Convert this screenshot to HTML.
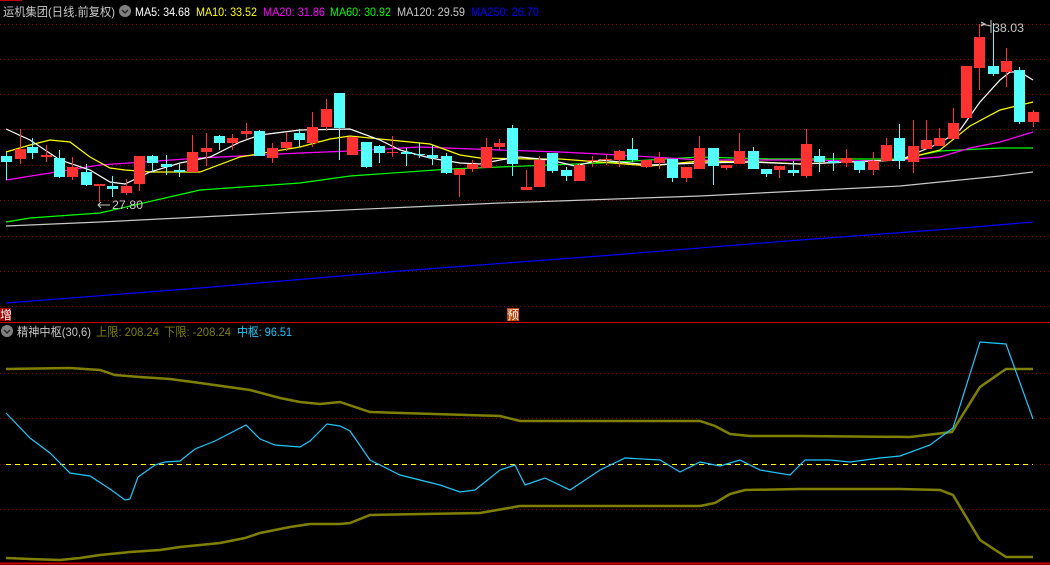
<!DOCTYPE html>
<html><head><meta charset="utf-8"><style>
html,body{margin:0;padding:0;background:#000;width:1050px;height:565px;overflow:hidden}
svg{display:block}
text{font-family:"Liberation Sans","Noto Sans CJK SC",sans-serif;font-size:12px}
</style></head><body>
<svg width="1050" height="565" viewBox="0 0 1050 565" xmlns="http://www.w3.org/2000/svg">
<rect width="1050" height="565" fill="#000"/>
<line x1="0" y1="0.5" x2="22" y2="0.5" stroke="#c00000"/>
<g stroke="#8a0000" stroke-dasharray="1,3" stroke-width="1">
<line x1="0" y1="24.5" x2="1050" y2="24.5"/><line x1="0" y1="59.5" x2="1050" y2="59.5"/>
<line x1="0" y1="94.5" x2="1050" y2="94.5"/><line x1="0" y1="129.5" x2="1050" y2="129.5"/>
<line x1="0" y1="165.5" x2="1050" y2="165.5"/><line x1="0" y1="200.5" x2="1050" y2="200.5"/>
<line x1="0" y1="236.5" x2="1050" y2="236.5"/><line x1="0" y1="271.5" x2="1050" y2="271.5"/>
<line x1="0" y1="306.5" x2="1050" y2="306.5"/>
<line x1="0" y1="373.5" x2="1050" y2="373.5"/><line x1="0" y1="418.5" x2="1050" y2="418.5"/>
<line x1="0" y1="464.5" x2="1050" y2="464.5"/><line x1="0" y1="509.5" x2="1050" y2="509.5"/>
</g>
<line x1="0" y1="322.5" x2="1050" y2="322.5" stroke="#d00000"/>
<line x1="0" y1="563.5" x2="1050" y2="563.5" stroke="#d00000" stroke-width="2"/>
<line x1="6" y1="464.5" x2="1033" y2="464.5" stroke="#ffff00" stroke-dasharray="5,4"/>

<g fill="none" stroke-width="1.2">
<polyline stroke="#0000ff" points="6,303 200,288 400,271 600,256 800,240 950,229 1033,222"/>
<polyline stroke="#c8c8c8" points="6,226 100,222 300,212 500,203 700,196 900,186 1000,176 1033,172"/>
<polyline stroke="#00ff00" points="6,222 30,218 100,213 200,190 300,183 350,176 450,169 600,163 700,157 770,159 900,159 940,151 1000,148 1033,148"/>
<polyline stroke="#ff00ff" points="6,180 100,165 200,158 300,153 350,151 420,147 500,150 560,152 620,155 700,160 800,160 850,161 900,160 940,157 970,148 1000,142 1033,132"/>
<polyline stroke="#ffff00" points="6,152 30,145 50,140 70,142 90,157 110,168 125,170 150,172 200,172 240,157 300,147 330,139 350,136 400,141 430,144 460,155 480,158 530,159 560,159 600,162 650,166 700,161 760,162 800,164 900,160 940,150 970,126 1000,110 1033,102"/>
<polyline stroke="#ffffff" points="6,129 30,140 60,160 90,170 110,182 125,184 150,172 180,163 210,157 240,142 260,135 300,130 350,129 380,140 400,150 430,158 460,163 480,164 500,160 520,157 550,160 575,166 600,160 650,165 700,163 750,162 800,164 850,162 900,160 940,143 960,130 980,102 1000,80 1010,72 1020,72 1033,80"/>
</g>

<g stroke="#54ffff" stroke-width="1">
<line x1="6.5" y1="152" x2="6.5" y2="180"/><line x1="32.5" y1="138" x2="32.5" y2="159"/><line x1="59.5" y1="150" x2="59.5" y2="178"/><line x1="86.5" y1="164" x2="86.5" y2="186"/><line x1="112.5" y1="176" x2="112.5" y2="197"/><line x1="152.5" y1="155" x2="152.5" y2="172"/><line x1="166.5" y1="155" x2="166.5" y2="175"/><line x1="179.5" y1="164" x2="179.5" y2="177"/><line x1="219.5" y1="135" x2="219.5" y2="150"/><line x1="259.5" y1="130" x2="259.5" y2="156"/><line x1="299.5" y1="129" x2="299.5" y2="147"/><line x1="339.5" y1="93" x2="339.5" y2="160"/><line x1="366.5" y1="142" x2="366.5" y2="168"/><line x1="379.5" y1="145" x2="379.5" y2="163"/><line x1="406.5" y1="148" x2="406.5" y2="166"/><line x1="419.5" y1="143" x2="419.5" y2="158"/><line x1="432.5" y1="145" x2="432.5" y2="165"/><line x1="446.5" y1="153" x2="446.5" y2="174"/><line x1="512.5" y1="125" x2="512.5" y2="176"/><line x1="552.5" y1="153" x2="552.5" y2="173"/><line x1="566.5" y1="167" x2="566.5" y2="181"/><line x1="632.5" y1="138" x2="632.5" y2="162"/><line x1="672.5" y1="159" x2="672.5" y2="182"/><line x1="713.5" y1="148" x2="713.5" y2="185"/><line x1="753.5" y1="147" x2="753.5" y2="169"/><line x1="766.5" y1="169" x2="766.5" y2="177"/><line x1="793.5" y1="161" x2="793.5" y2="176"/><line x1="819.5" y1="149" x2="819.5" y2="172"/><line x1="833.5" y1="153" x2="833.5" y2="171"/><line x1="859.5" y1="161" x2="859.5" y2="173"/><line x1="899.5" y1="124" x2="899.5" y2="169"/><line x1="993.5" y1="23" x2="993.5" y2="76"/><line x1="1019.5" y1="67" x2="1019.5" y2="124"/>
</g>
<g fill="#54ffff">
<rect x="1" y="156" width="11" height="6"/><rect x="27" y="147" width="11" height="6"/><rect x="54" y="158" width="11" height="19"/><rect x="81" y="172" width="11" height="13"/><rect x="107" y="186" width="11" height="3"/><rect x="147" y="156" width="11" height="7"/><rect x="161" y="164" width="11" height="3"/><rect x="174" y="170" width="11" height="2"/><rect x="214" y="136" width="11" height="7"/><rect x="254" y="131" width="11" height="25"/><rect x="294" y="133" width="11" height="7"/><rect x="334" y="93" width="11" height="35"/><rect x="361" y="142" width="11" height="25"/><rect x="374" y="146" width="11" height="7"/><rect x="401" y="152" width="11" height="2"/><rect x="414" y="154" width="11" height="1"/><rect x="427" y="155" width="11" height="3"/><rect x="441" y="156" width="11" height="17"/><rect x="507" y="128" width="11" height="36"/><rect x="547" y="153" width="11" height="18"/><rect x="561" y="170" width="11" height="6"/><rect x="627" y="149" width="11" height="11"/><rect x="667" y="159" width="11" height="19"/><rect x="708" y="148" width="11" height="18"/><rect x="748" y="151" width="11" height="18"/><rect x="761" y="169" width="11" height="5"/><rect x="788" y="170" width="11" height="3"/><rect x="814" y="156" width="11" height="6"/><rect x="828" y="161" width="11" height="2"/><rect x="854" y="161" width="11" height="9"/><rect x="894" y="138" width="11" height="23"/><rect x="988" y="66" width="11" height="8"/><rect x="1014" y="70" width="11" height="52"/>
</g>
<g stroke="#ff3232" stroke-width="1">
<line x1="20.5" y1="129" x2="20.5" y2="164"/><line x1="46.5" y1="145" x2="46.5" y2="162"/><line x1="72.5" y1="157" x2="72.5" y2="180"/><line x1="99.5" y1="184" x2="99.5" y2="202"/><line x1="126.5" y1="179" x2="126.5" y2="195"/><line x1="139.5" y1="156" x2="139.5" y2="191"/><line x1="192.5" y1="135" x2="192.5" y2="172"/><line x1="206.5" y1="133" x2="206.5" y2="166"/><line x1="232.5" y1="134" x2="232.5" y2="150"/><line x1="246.5" y1="123" x2="246.5" y2="139"/><line x1="272.5" y1="143" x2="272.5" y2="163"/><line x1="286.5" y1="132" x2="286.5" y2="151"/><line x1="312.5" y1="112" x2="312.5" y2="147"/><line x1="326.5" y1="99" x2="326.5" y2="131"/><line x1="392.5" y1="136" x2="392.5" y2="157"/><line x1="459.5" y1="169" x2="459.5" y2="197"/><line x1="472.5" y1="160" x2="472.5" y2="172"/><line x1="486.5" y1="138" x2="486.5" y2="168"/><line x1="499.5" y1="139" x2="499.5" y2="150"/><line x1="526.5" y1="170" x2="526.5" y2="190"/><line x1="539.5" y1="156" x2="539.5" y2="187"/><line x1="579.5" y1="163" x2="579.5" y2="181"/><line x1="592.5" y1="156" x2="592.5" y2="167"/><line x1="606.5" y1="155" x2="606.5" y2="165"/><line x1="619.5" y1="150" x2="619.5" y2="167"/><line x1="646.5" y1="160" x2="646.5" y2="168"/><line x1="659.5" y1="152" x2="659.5" y2="169"/><line x1="686.5" y1="167" x2="686.5" y2="182"/><line x1="699.5" y1="136" x2="699.5" y2="169"/><line x1="726.5" y1="165" x2="726.5" y2="170"/><line x1="739.5" y1="133" x2="739.5" y2="164"/><line x1="779.5" y1="166" x2="779.5" y2="178"/><line x1="806.5" y1="129" x2="806.5" y2="178"/><line x1="846.5" y1="149" x2="846.5" y2="167"/><line x1="873.5" y1="152" x2="873.5" y2="175"/><line x1="886.5" y1="138" x2="886.5" y2="161"/><line x1="913.5" y1="120" x2="913.5" y2="173"/><line x1="926.5" y1="120" x2="926.5" y2="149"/><line x1="939.5" y1="128" x2="939.5" y2="146"/><line x1="953.5" y1="108" x2="953.5" y2="139"/><line x1="979.5" y1="24" x2="979.5" y2="90"/><line x1="1006.5" y1="48" x2="1006.5" y2="87"/><line x1="1033.5" y1="110" x2="1033.5" y2="127"/>
</g>
<g fill="#ff3232">
<rect x="15" y="149" width="11" height="10"/><rect x="41" y="155" width="11" height="2"/><rect x="67" y="167" width="11" height="10"/><rect x="94" y="184" width="11" height="2"/><rect x="121" y="186" width="11" height="7"/><rect x="134" y="156" width="11" height="28"/><rect x="187" y="152" width="11" height="20"/><rect x="201" y="148" width="11" height="4"/><rect x="227" y="138" width="11" height="5"/><rect x="241" y="131" width="11" height="3"/><rect x="267" y="148" width="11" height="10"/><rect x="281" y="142" width="11" height="6"/><rect x="307" y="127" width="11" height="16"/><rect x="321" y="109" width="11" height="18"/><rect x="347" y="137" width="11" height="18"/><rect x="387" y="152" width="11" height="1"/><rect x="454" y="169" width="11" height="6"/><rect x="467" y="164" width="11" height="5"/><rect x="481" y="147" width="11" height="21"/><rect x="494" y="143" width="11" height="4"/><rect x="521" y="187" width="11" height="3"/><rect x="534" y="160" width="11" height="27"/><rect x="574" y="165" width="11" height="16"/><rect x="587" y="160" width="11" height="1"/><rect x="601" y="159" width="11" height="1"/><rect x="614" y="151" width="11" height="9"/><rect x="641" y="160" width="11" height="7"/><rect x="654" y="158" width="11" height="5"/><rect x="681" y="167" width="11" height="11"/><rect x="694" y="148" width="11" height="21"/><rect x="721" y="165" width="11" height="3"/><rect x="734" y="151" width="11" height="13"/><rect x="774" y="166" width="11" height="4"/><rect x="801" y="144" width="11" height="32"/><rect x="841" y="158" width="11" height="5"/><rect x="868" y="161" width="11" height="9"/><rect x="881" y="145" width="11" height="16"/><rect x="908" y="146" width="11" height="16"/><rect x="921" y="140" width="11" height="9"/><rect x="934" y="138" width="11" height="8"/><rect x="948" y="123" width="11" height="16"/><rect x="961" y="66" width="11" height="52"/><rect x="974" y="37" width="11" height="31"/><rect x="1001" y="61" width="11" height="11"/><rect x="1028" y="112" width="11" height="10"/>
</g>

<g stroke="#c8c8c8" fill="none"><polyline points="981,22 985,24 981,26"/><line x1="981" y1="24" x2="991" y2="26"/><line x1="991" y1="20" x2="991" y2="33"/><line x1="98" y1="205" x2="110" y2="205"/><polyline points="101,202 98,205 101,208"/></g>
<text x="993" y="32" fill="#c8c8c8" textLength="31" lengthAdjust="spacingAndGlyphs">38.03</text>
<text x="112" y="209" fill="#c8c8c8" textLength="31" lengthAdjust="spacingAndGlyphs">27.80</text>

<text x="3" y="16" fill="#c8c8c8" textLength="112" lengthAdjust="spacingAndGlyphs">运机集团(日线.前复权)</text>
<circle cx="125" cy="11" r="6" fill="#808080"/><polyline points="122,10 125,13 128,10" fill="none" stroke="#222" stroke-width="1.3"/>
<text x="135" y="16" fill="#ffffff" textLength="55" lengthAdjust="spacingAndGlyphs">MA5: 34.68</text>
<text x="196" y="16" fill="#ffff00" textLength="61" lengthAdjust="spacingAndGlyphs">MA10: 33.52</text>
<text x="263" y="16" fill="#ff00ff" textLength="62" lengthAdjust="spacingAndGlyphs">MA20: 31.86</text>
<text x="330" y="16" fill="#00ff00" textLength="61" lengthAdjust="spacingAndGlyphs">MA60: 30.92</text>
<text x="397" y="16" fill="#c8c8c8" textLength="68" lengthAdjust="spacingAndGlyphs">MA120: 29.59</text>
<text x="471" y="16" fill="#0000ff" textLength="68" lengthAdjust="spacingAndGlyphs">MA250: 26.70</text>

<rect x="0" y="308" width="11" height="13" fill="#a00000"/><text x="0" y="319" fill="#fff">增</text>
<rect x="507" y="308" width="12" height="13" fill="#c04000"/><text x="507" y="319" fill="#fff">预</text>

<circle cx="7" cy="331" r="6" fill="#808080"/><polyline points="4,330 7,333 10,330" fill="none" stroke="#222" stroke-width="1.3"/>
<text x="17" y="336" fill="#c8c8c8" textLength="74" lengthAdjust="spacingAndGlyphs">精神中枢(30,6)</text>
<text x="96" y="336" fill="#808000" textLength="63" lengthAdjust="spacingAndGlyphs">上限: 208.24</text>
<text x="164" y="336" fill="#808000" textLength="67" lengthAdjust="spacingAndGlyphs">下限: -208.24</text>
<text x="237" y="336" fill="#1ec8ff" textLength="55" lengthAdjust="spacingAndGlyphs">中枢: 96.51</text>

<g fill="none">
<polyline stroke="#808000" stroke-width="2.5" points="6,369 70,368 100,370 115,375 140,377 170,379 200,383 250,390 280,398 300,402 320,404 340,402 370,412 500,416 520,421 700,421 715,426 730,434 750,436 800,436 910,437 952,432 980,387 1006,369 1033,369"/>
<polyline stroke="#808000" stroke-width="2.5" points="6,558 30,559 60,560 80,558 100,555 130,552 160,550 180,547 220,543 245,538 260,533 290,527 310,524 340,524 350,523 370,515 480,513 520,506 700,506 715,503 730,494 745,490 800,489 900,489 940,490 953,495 980,540 1006,557 1033,557"/>
<polyline stroke="#1ec8ff" stroke-width="1.2" points="6,413 30,438 50,453 60,463 70,473 90,476 110,489 125,500 130,499 138,477 155,465 165,462 180,461 195,449 215,441 246,425 260,439 275,445 300,447 310,441 327,424 340,426 350,431 370,460 400,475 440,485 460,492 475,490 500,470 515,465 525,485 545,478 570,490 600,470 625,458 660,460 680,472 700,462 720,466 740,460 760,470 790,475 805,460 830,460 850,462 880,458 900,456 930,445 953,428 980,342 1006,344 1033,419"/>
</g>
</svg>
</body></html>
